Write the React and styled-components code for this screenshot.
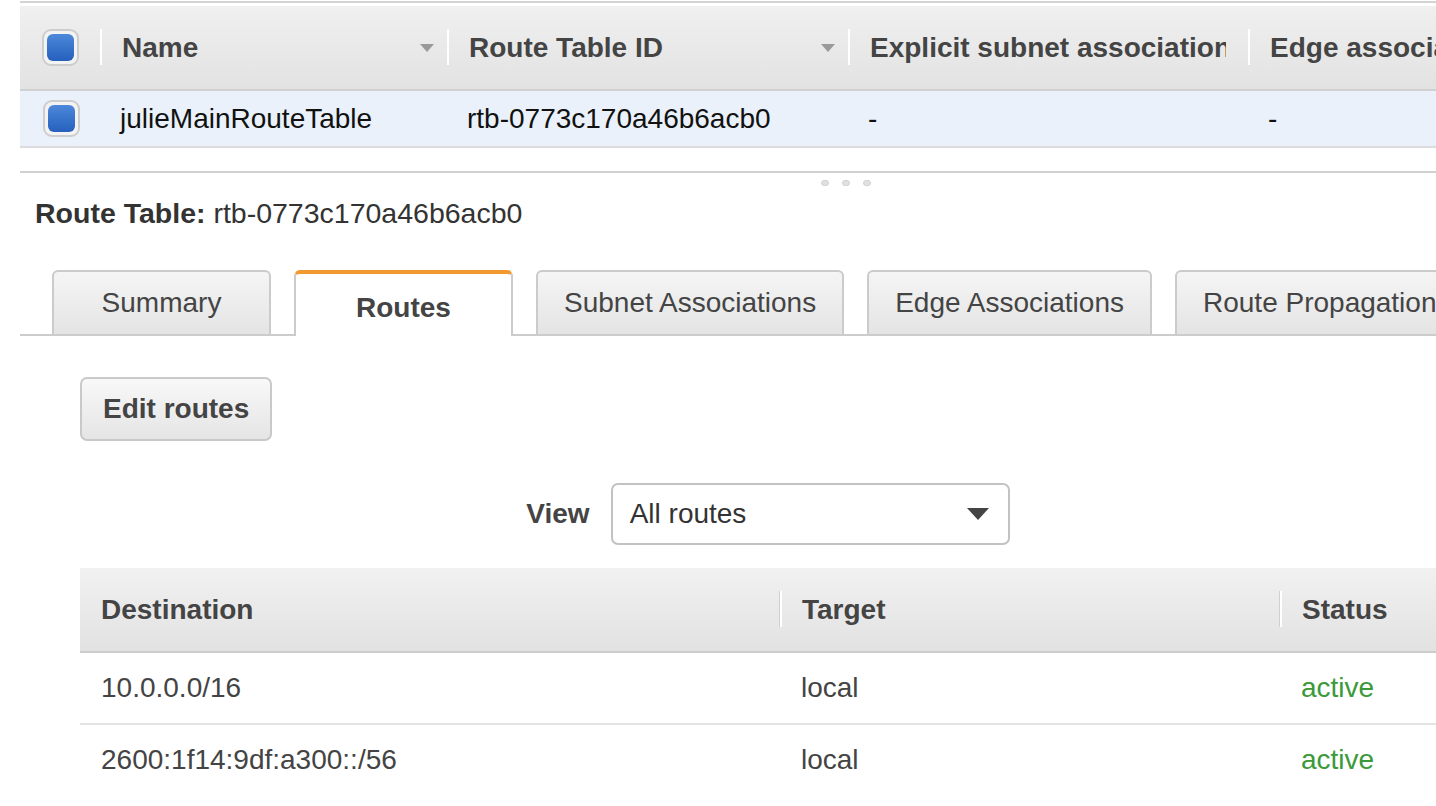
import React from 'react';
import styled, { createGlobalStyle } from 'styled-components';

const GlobalStyle = createGlobalStyle`
  body {
    margin: 0;
    background: #fff;
    overflow: hidden;
    font-family: 'Liberation Sans', Arial, Helvetica, sans-serif;
  }
`;

const Page = styled.div`
  width: 1652px;
  margin-left: 20px;
  padding-top: 1px;
`;

const TopTable = styled.div`
  border-top: 2px solid #d3d3d3;
  padding-top: 3px;
`;

const HeadRow = styled.div`
  display: grid;
  grid-template-columns: 80px 347px 401px 400px 424px;
  height: 83px;
  background: linear-gradient(#f0f0f0, #e2e2e2);
  border-bottom: 2px solid #d0d0d0;
`;

const HeadCell = styled.div`
  display: flex;
  align-items: center;
  justify-content: ${(p) => (p.$center ? 'center' : 'flex-start')};
  position: relative;
  padding: ${(p) => (p.$center ? '0' : '0 13px 0 22px')};
  font-size: 28px;
  font-weight: bold;
  color: #444;
  white-space: nowrap;
  overflow: hidden;
  min-width: 0;
`;

const HeadLabel = styled.span`
  flex: 1;
  overflow: hidden;
  margin-right: ${(p) => (p.$clip ? '9px' : '0')};
`;

const Separator = styled.span`
  position: absolute;
  top: 23px;
  left: -1px;
  width: 2px;
  height: 36px;
  background: #fff;
  border-left: 1px solid #d0d0d0;
`;

const SortArrow = styled.span`
  width: 0;
  height: 0;
  border-left: 7.5px solid transparent;
  border-right: 7.5px solid transparent;
  border-top: 8px solid #9a9a9a;
  flex-shrink: 0;
`;

const BodyRow = styled.div`
  display: grid;
  grid-template-columns: 80px 347px 401px 400px 424px;
  height: 55px;
  background: #eaf1fb;
  border-bottom: 2px solid #dcdcdc;
`;

const BodyCell = styled.div`
  display: flex;
  align-items: center;
  justify-content: ${(p) => (p.$center ? 'center' : 'flex-start')};
  padding: ${(p) => (p.$center ? '0 0 0 2px' : '0 0 0 20px')};
  font-size: 28px;
  color: #111;
  white-space: nowrap;
  overflow: hidden;
`;

const CheckOuter = styled.span`
  width: 33px;
  height: 33px;
  border: 2px solid #cdcdcd;
  border-radius: 9px;
  background: #f3f3f3;
  display: flex;
  align-items: center;
  justify-content: center;
`;

const CheckInner = styled.span`
  width: 27px;
  height: 27px;
  border-radius: 6px;
  background: linear-gradient(#4c88da, #2660bd);
`;

const Divider = styled.div`
  margin-top: 23px;
  border-top: 2px solid #d0d0d0;
  display: flex;
  justify-content: center;
  gap: 13px;
  padding-top: 7px;
`;

const Grip = styled.span`
  width: 8px;
  height: 6px;
  border-radius: 3px;
  background: #e0e0e0;
  border: 1px solid #d2d2d2;
  box-sizing: border-box;
`;

const Title = styled.div`
  margin-top: 11px;
  padding-left: 15px;
  font-size: 28.5px;
  line-height: 32px;
  color: #333;
`;

const TabBar = styled.div`
  display: flex;
  align-items: flex-end;
  gap: 23px;
  margin-top: 41px;
  padding-left: 32px;
  border-bottom: 2px solid #cccccc;
  height: 64px;
`;

const Tab = styled.div`
  box-sizing: border-box;
  min-width: 219px;
  height: ${(p) => (p.$active ? '66px' : '64px')};
  margin-bottom: ${(p) => (p.$active ? '-2px' : '0')};
  padding: ${(p) => (p.$active ? '6px 26px 0' : '0 26px')};
  display: flex;
  align-items: center;
  justify-content: center;
  border: 2px solid #cbcbcb;
  border-top: ${(p) => (p.$active ? '4px solid #f39a2e' : '2px solid #cbcbcb')};
  border-bottom: none;
  border-radius: 6px 6px 0 0;
  background: ${(p) => (p.$active ? '#fff' : 'linear-gradient(#f5f5f5, #e4e4e4)')};
  font-size: 28px;
  font-weight: ${(p) => (p.$active ? 'bold' : 'normal')};
  color: #444;
  white-space: nowrap;
  flex-shrink: 0;
`;

const Content = styled.div`
  padding: 41px 0 0 60px;
  width: 1376px;
`;

const Button = styled.button`
  height: 64px;
  padding: 0 21px;
  border: 2px solid #c9c9c9;
  border-radius: 7px;
  background: linear-gradient(#f8f8f8, #e5e5e5);
  font-family: inherit;
  font-size: 28px;
  font-weight: bold;
  color: #444;
`;

const ViewRow = styled.div`
  margin-top: 42px;
  display: flex;
  justify-content: center;
  align-items: center;
  gap: 21px;
`;

const ViewLabel = styled.span`
  font-size: 28px;
  font-weight: bold;
  color: #444;
`;

const Select = styled.div`
  box-sizing: border-box;
  width: 399px;
  height: 62px;
  border: 2px solid #c2c2c2;
  border-radius: 7px;
  padding: 0 19px 0 17px;
  display: flex;
  align-items: center;
  justify-content: space-between;
  font-size: 28px;
  color: #333;
`;

const Caret = styled.span`
  width: 0;
  height: 0;
  border-left: 11.5px solid transparent;
  border-right: 11.5px solid transparent;
  border-top: 12px solid #444;
`;

const RouteGrid = styled.div`
  margin-top: 23px;
`;

const RouteHead = styled.div`
  display: grid;
  grid-template-columns: 700px 500px 1fr;
  height: 83px;
  background: linear-gradient(#f1f1f1, #e2e2e2);
  border-bottom: 2px solid #cccccc;
`;

const RouteHeadCell = styled.div`
  position: relative;
  display: flex;
  align-items: center;
  padding-left: ${(p) => (p.$first ? '21px' : '22px')};
  font-size: 28px;
  font-weight: bold;
  color: #444;
`;

const RouteRow = styled.div`
  display: grid;
  grid-template-columns: 700px 500px 1fr;
  height: 70px;
  border-bottom: ${(p) => (p.$last ? 'none' : '2px solid #e4e4e4')};
`;

const RouteCell = styled.div`
  display: flex;
  align-items: center;
  padding-left: 21px;
  font-size: 28px;
  color: ${(p) => (p.$status ? '#3a9a3a' : '#444')};
`;

const Checkbox = () => (
  <CheckOuter>
    <CheckInner />
  </CheckOuter>
);

const topColumns = [
  { label: 'Name', sort: true },
  { label: 'Route Table ID', sort: true },
  { label: 'Explicit subnet association', clip: true },
  { label: 'Edge associations' },
];

const tabs = ['Summary', 'Routes', 'Subnet Associations', 'Edge Associations', 'Route Propagation'];

const routes = [
  { destination: '10.0.0.0/16', target: 'local', status: 'active' },
  { destination: '2600:1f14:9df:a300::/56', target: 'local', status: 'active' },
];

const App = () => {
  return (
    <Page>
      <GlobalStyle />
      <TopTable>
        <HeadRow>
          <HeadCell $center>
            <Checkbox />
          </HeadCell>
          {topColumns.map((col) => (
            <HeadCell key={col.label}>
              <Separator />
              <HeadLabel $clip={col.clip}>{col.label}</HeadLabel>
              {col.sort && <SortArrow />}
            </HeadCell>
          ))}
        </HeadRow>
        <BodyRow>
          <BodyCell $center>
            <Checkbox />
          </BodyCell>
          <BodyCell>julieMainRouteTable</BodyCell>
          <BodyCell>rtb-0773c170a46b6acb0</BodyCell>
          <BodyCell>-</BodyCell>
          <BodyCell>-</BodyCell>
        </BodyRow>
      </TopTable>

      <Divider>
        <Grip />
        <Grip />
        <Grip />
      </Divider>

      <Title>
        <b>Route Table:</b> rtb-0773c170a46b6acb0
      </Title>

      <TabBar>
        {tabs.map((t) => (
          <Tab key={t} $active={t === 'Routes'}>
            {t}
          </Tab>
        ))}
      </TabBar>

      <Content>
        <Button>Edit routes</Button>
        <ViewRow>
          <ViewLabel>View</ViewLabel>
          <Select>
            All routes
            <Caret />
          </Select>
        </ViewRow>
        <RouteGrid>
          <RouteHead>
            <RouteHeadCell $first>Destination</RouteHeadCell>
            <RouteHeadCell>
              <Separator />
              Target
            </RouteHeadCell>
            <RouteHeadCell>
              <Separator />
              Status
            </RouteHeadCell>
          </RouteHead>
          {routes.map((r, i) => (
            <RouteRow key={r.destination} $last={i === routes.length - 1}>
              <RouteCell>{r.destination}</RouteCell>
              <RouteCell>{r.target}</RouteCell>
              <RouteCell $status>{r.status}</RouteCell>
            </RouteRow>
          ))}
        </RouteGrid>
      </Content>
    </Page>
  );
};

export default App;
